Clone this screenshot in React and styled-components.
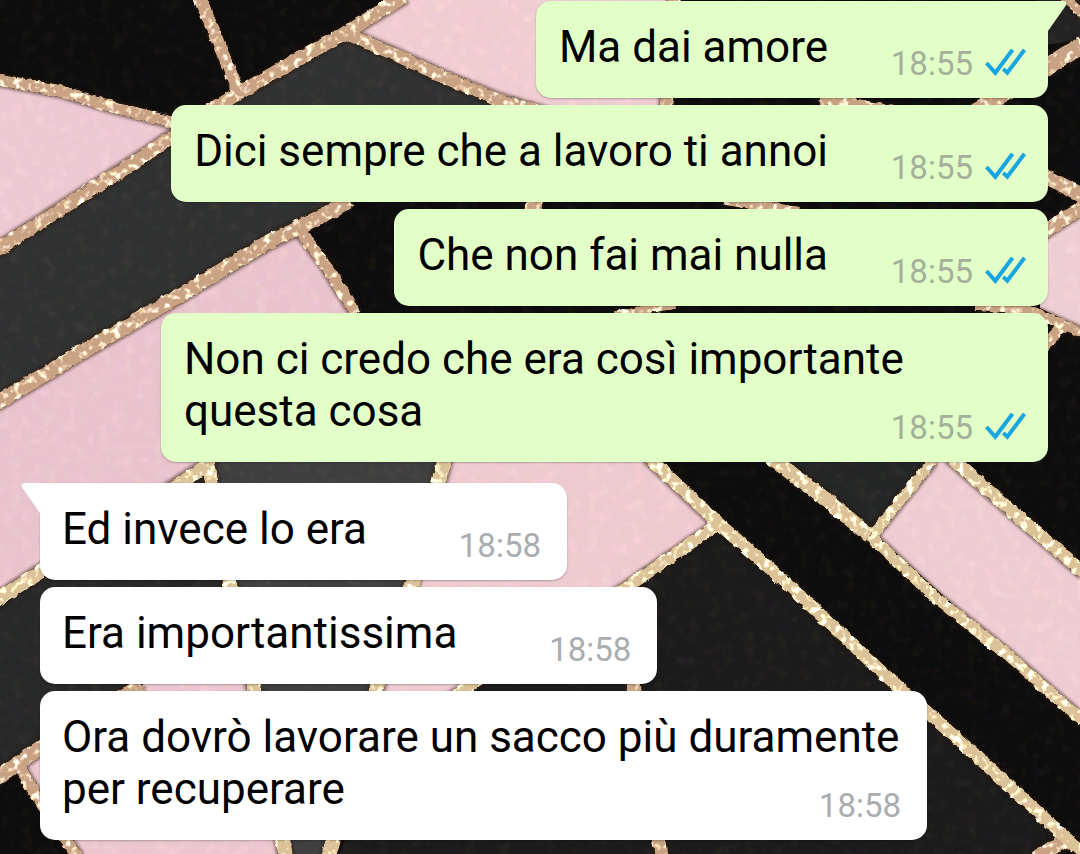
import React from 'react';
import styled, { createGlobalStyle } from 'styled-components';

const messages = [
    { id: 1, own: true, first: true, text: 'Ma dai amore', time: '18:55' },
    { id: 2, own: true, text: 'Dici sempre che a lavoro ti annoi', time: '18:55' },
    { id: 3, own: true, text: 'Che non fai mai nulla', time: '18:55' },
    { id: 4, own: true, text: 'Non ci credo che era così importante questa cosa', time: '18:55' },
    { id: 5, own: false, first: true, text: 'Ed invece lo era', time: '18:58' },
    { id: 6, own: false, text: 'Era importantissima', time: '18:58' },
    { id: 7, own: false, text: 'Ora dovrò lavorare un sacco più duramente per recuperare', time: '18:58' },
];

// wallpaper shapes, in the 1080x854 box of the drawing
const stones = [
    { fill: '#303131', d: 'M0 248 L165 143 L235 98 L345 33 L500 100 L540 110 L331 213 L0 402Z' },
    { fill: '#ebc8d2', d: 'M0 82 L60 92 L110 106 L172 122 L172 138 L0 248Z' },
    { fill: '#efcbd2', d: 'M400 0 L675 0 L664 112 L540 110 L345 33Z' },
    { fill: '#e8c3cd', d: 'M0 402 L300 232 L355 312 L440 465 L207 470 L0 598Z' },
    { fill: '#3f3f3f', d: 'M207 470 L215 455 L440 455 L412 583 L377 687 L330 854 L285 854Z' },
    { fill: '#272828', d: 'M0 604 L207 470 L230 583 L142 686 L0 775Z' },
    { fill: '#edc9d0', d: 'M440 455 L648 455 L716 526 L468 687 L375 710 L377 687 L412 583Z' },
    { fill: '#ebc6cf', d: 'M22 768 L148 681 L253 681 L285 854 L75 854Z' },
    { fill: '#1b1b1b', d: 'M716 530 L1067 839 L1040 854 L340 854 L375 740Z' },
    { fill: '#242626', d: 'M775 455 L935 455 L874 533Z' },
    { fill: '#edcbd2', d: 'M874 533 L930 462 L957 462 L1080 571 L1080 719Z' },
    { fill: '#232323', d: 'M660 100 L1080 40 L1080 0 L1040 0Z' },
    { fill: '#edcdd3', d: 'M1040 238 L1080 210 L1080 328 L1040 308Z' },
];

const roseVeins = [
    { w: 12, d: 'M-5 79 L60 91 L110 106 L174 123' },
    { w: 14, d: 'M-5 251 L141 158 L220 104 L293 62 L345 33 L405 -4' },
    { w: 13, d: 'M199 -4 L239 93' },
    { w: 13, d: 'M345 33 L396 55 L448 79 L499 100 L560 118' },
    { w: 15, d: 'M-5 404 L77 355 L177 297 L267 243 L331 211 L350 200' },
    { w: 12, d: 'M300 231 L325 264 L356 314' },
    { w: 14, d: 'M675 -4 L666 112' },
    { w: 10, d: 'M1060 -6 L1084 14' },
    { w: 18, d: 'M975 112 L1048 66 L1084 44' },
    { w: 12, d: 'M820 98 L900 113' },
    { w: 15, d: 'M1040 174 L1084 196' },
    { w: 14, d: 'M1040 234 L1084 206' },
    { w: 10, d: 'M725 200 L800 212' },
    { w: 14, d: 'M538 200 L530 214' },
    { w: 10, d: 'M615 317 L675 303' },
    { w: 10, d: 'M975 306 L1030 310 L1084 334' },
    { w: 12, d: 'M1044 346 L1062 326' },
    { w: 15, d: 'M-5 779 L37 750 L142 685' },
    { w: 12, d: 'M20 768 L37 797 L78 858' },
    { w: 14, d: 'M632 680 L662 858' },
    { w: 15, d: 'M1067 839 L1036 858' },
];

const goldVeins = [
    { w: 14, d: 'M-5 601 L40 572 L205 467' },
    { w: 15, d: 'M207 460 L230 583 L254 687 L286 858' },
    { w: 15, d: 'M446 455 L412 583 L377 687 L328 858' },
    { w: 13, d: 'M648 457 L719 524 L781 578 L884 674 L970 750 L1067 839 L1084 854' },
    { w: 12, d: 'M716 526 L626 588 L468 687 L375 750' },
    { w: 15, d: 'M770 457 L833 505 L870 536' },
    { w: 12, d: 'M870 536 L936 598 L1005 653 L1084 722' },
    { w: 11, d: 'M874 533 L933 460' },
    { w: 13, d: 'M950 457 L1022 520 L1084 573' },
];

const Wallpaper = () => (
    <Backdrop viewBox="0 0 1080 854" preserveAspectRatio="xMidYMid slice" aria-hidden="true">
        <defs>
            <filter id="stone" x="0" y="0" width="1" height="1" colorInterpolationFilters="sRGB">
                <feTurbulence type="fractalNoise" baseFrequency="0.09" numOctaves="3" seed="4" result="n" />
                <feColorMatrix in="n" type="matrix" values="0.12 0 0 0 -0.06  0.08 0.05 0 0 -0.065  0.06 0 0.06 0 -0.06  0 0 0 0 1" result="g" />
                <feComposite in="SourceGraphic" in2="g" operator="arithmetic" k2="1" k3="1" />
            </filter>
            <filter id="glitter" filterUnits="userSpaceOnUse" x="-10" y="-10" width="1100" height="880" colorInterpolationFilters="sRGB">
                <feTurbulence type="fractalNoise" baseFrequency="0.14" numOctaves="2" seed="9" result="n" />
                <feColorMatrix in="n" type="matrix" values="1.5 0 0 0 -0.78  1.8 0 0 0 -0.93  1.8 0 0.2 0 -1.03  0 0 0 0 1" result="g" />
                <feDisplacementMap in="SourceGraphic" in2="n" scale="5" xChannelSelector="R" yChannelSelector="G" result="s" />
                <feComposite in="s" in2="g" operator="arithmetic" k2="1" k3="1" result="c" />
                <feComposite in="c" in2="s" operator="in" />
                <feGaussianBlur stdDeviation="0.7" />
            </filter>
            <filter id="soft" filterUnits="userSpaceOnUse" x="-10" y="-10" width="1100" height="880">
                <feGaussianBlur stdDeviation="1.5" />
            </filter>
        </defs>
        <g filter="url(#stone)">
            <rect width="1080" height="854" fill="#0d0d0d" />
            {stones.map((item, idx) => <path key={idx} d={item.d} fill={item.fill} />)}
        </g>
        <g filter="url(#soft)" fill="none" stroke="#2a1408" strokeOpacity="0.5">
            {[...roseVeins, ...goldVeins].map((item, idx) => (
                <path key={idx} d={item.d} strokeWidth={item.w + 3} />
            ))}
        </g>
        <g filter="url(#glitter)" fill="none" strokeLinejoin="round">
            {roseVeins.map((item, idx) => <path key={idx} d={item.d} strokeWidth={item.w} stroke="#c8a283" />)}
            {goldVeins.map((item, idx) => <path key={idx} d={item.d} strokeWidth={item.w} stroke="#dcc298" />)}
        </g>
    </Backdrop>
);

const ReadTicks = () => (
    <svg width="42" height="30" viewBox="0 0 42 30" fill="none" stroke="#17a6e0" strokeWidth="4" role="img" aria-label="Letto">
        <path d="M1.5 14 L10.3 23.8 L27.5 0.8" />
        <path d="M18.3 19.8 L22.3 23.8 L39.5 0.8" />
    </svg>
);

const Tail = ({ own }) => (
    <TailShape $own={own} width="19" height="32" viewBox="0 0 19 32" aria-hidden="true">
        <path d="M0 0 H15 Q20 0.5 17.5 5 L0 30Z" />
    </TailShape>
);

const Message = ({ item }) => (
    <Row $own={item.own} $first={item.first}>
        <Bubble $own={item.own} $first={item.first}>
            {item.first && <Tail own={item.own} />}
            <Text $own={item.own}>{item.text}</Text>
            <Meta $own={item.own}>
                <time>{item.time}</time>
                {item.own && <ReadTicks />}
            </Meta>
        </Bubble>
    </Row>
);

const App = () => {
    return (
        <>
            <GlobalStyle />
            <Screen>
                <Wallpaper />
                <Chat>
                    {messages.map((item) => <Message key={item.id} item={item} />)}
                </Chat>
            </Screen>
        </>
    );
};

const GlobalStyle = createGlobalStyle`
    * {
        box-sizing: border-box;
    }
    body {
        margin: 0;
        background: #0d0d0d;
        font-family: Roboto, "Liberation Sans", sans-serif;
    }
`;

const Screen = styled.main`
    display: grid;
    min-height: 100vh;
    overflow: hidden;
`;

const Backdrop = styled.svg`
    grid-area: 1 / 1;
    width: 100%;
    height: 100%;
    min-height: 0;
`;

const Chat = styled.ul`
    grid-area: 1 / 1;
    z-index: 1;
    display: flex;
    flex-direction: column;
    gap: 7px;
    margin: 0;
    padding: 1px 32px 14px 40px;
    list-style: none;
`;

const Row = styled.li`
    display: flex;
    justify-content: ${({ $own }) => ($own ? 'flex-end' : 'flex-start')};
    margin-top: ${({ $own, $first }) => ($first && !$own ? '14px' : '0')};
`;

const Bubble = styled.div`
    position: relative;
    display: grid;
    max-width: 88%;
    padding: 20px 23px 25px ${({ $own }) => ($own ? '23px' : '22px')};
    border-radius: 15px;
    ${({ $own, $first }) => $first && ($own ? 'border-top-right-radius: 0;' : 'border-top-left-radius: 0;')}
    background: ${({ $own }) => ($own ? '#e1ffc7' : '#ffffff')};
    box-shadow: 0 1px 2px rgba(0, 0, 0, 0.25);
`;

const TailShape = styled.svg`
    position: absolute;
    top: 0;
    ${({ $own }) => ($own ? 'left: 100%;' : 'right: 100%; transform: scaleX(-1);')}
    fill: ${({ $own }) => ($own ? '#e1ffc7' : '#ffffff')};
`;

const Text = styled.p`
    grid-area: 1 / 1;
    margin: 0;
    color: #000000;
    font-size: 44px;
    line-height: 52px;

    /* keeps room for the time on the last line */
    &::after {
        content: '';
        display: inline-block;
        width: ${({ $own }) => ($own ? '197px' : '177px')};
    }
`;

const Meta = styled.div`
    grid-area: 1 / 1;
    align-self: end;
    justify-self: end;
    display: flex;
    align-items: center;
    gap: 12px;
    margin: 0 ${({ $own }) => ($own ? '-2px' : '3px')} -10px 0;
    color: ${({ $own }) => ($own ? '#a3b09a' : '#a9adb0')};
    font-size: 33px;
    line-height: 38px;
`;

export default App;
